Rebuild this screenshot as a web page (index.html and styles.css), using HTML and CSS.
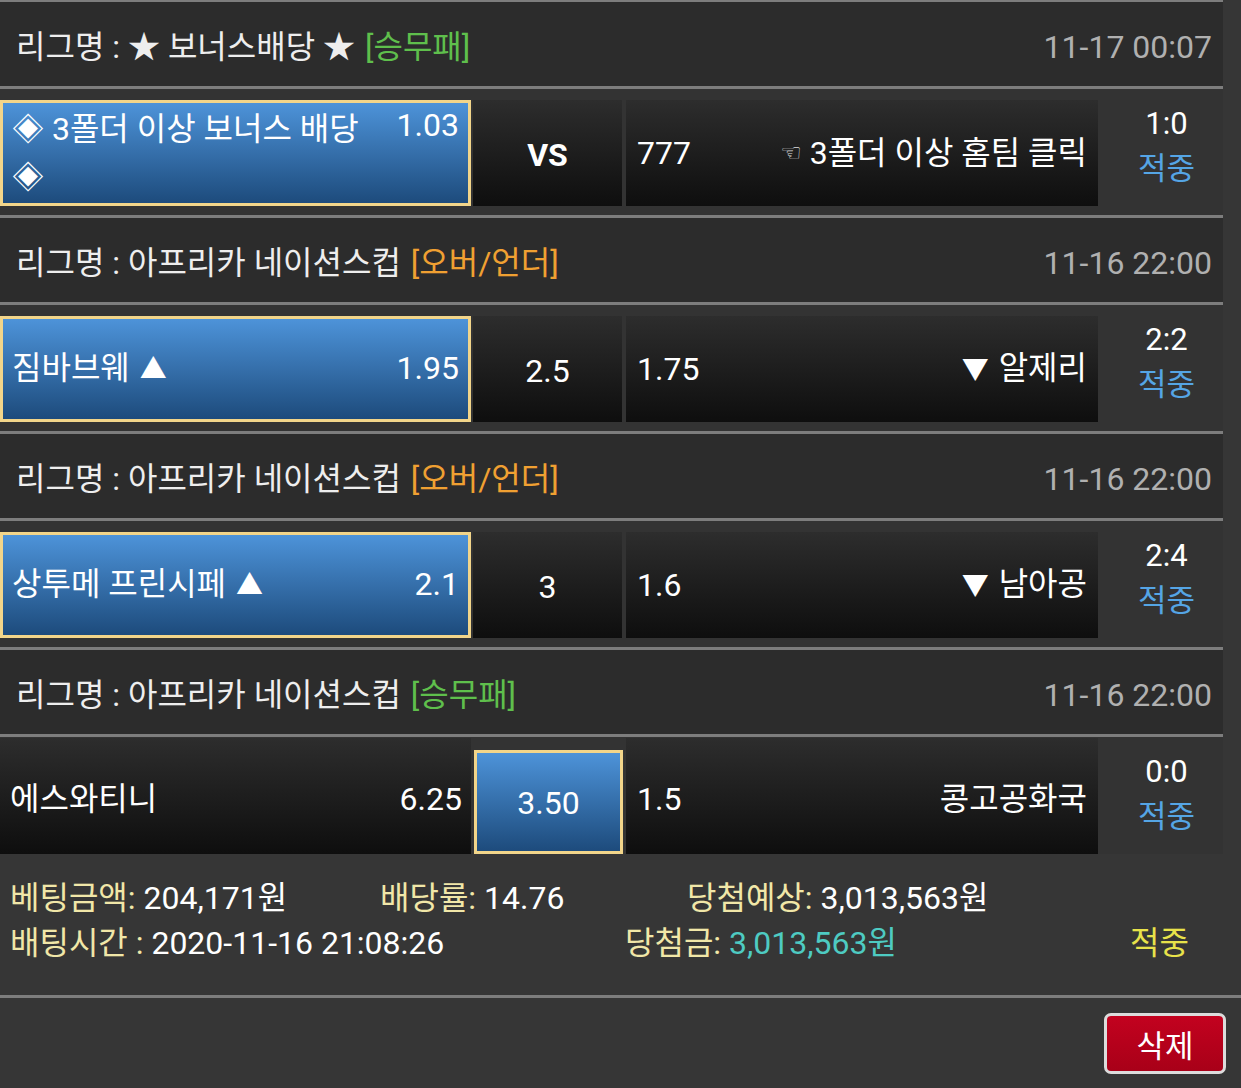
FILE: index.html
```html
<!DOCTYPE html>
<html lang="ko">
<head>
    <meta charset="UTF-8">
    <meta name="viewport" content="width=device-width, initial-scale=1.0">
    <title>배팅내역</title>
    <link rel="stylesheet" href="styles.css">
</head>
<body>
    <div class="slip">
        <div class="league">
            <div class="league-name">리그명 : ★ 보너스배당 ★ <span class="type win">[승무패]</span></div>
            <div class="league-time">11-17 00:07</div>
        </div>
        <div class="bet">
            <div class="cell home picked">
                <div class="pick-line">
                    <span class="team wrap">◈ 3폴더 이상 보너스 배당 ◈</span>
                    <span class="odds">1.03</span>
                </div>
            </div>
            <div class="cell mid"><b>VS</b></div>
            <div class="cell away">
                <span>777</span>
                <span><span class="hand">☜</span> 3폴더 이상 홈팀 클릭</span>
            </div>
            <div class="result"><span>1:0</span><span class="hit">적중</span></div>
        </div>

        <div class="league">
            <div class="league-name">리그명 : 아프리카 네이션스컵 <span class="type ou">[오버/언더]</span></div>
            <div class="league-time">11-16 22:00</div>
        </div>
        <div class="bet">
            <div class="cell home picked">
                <div class="pick-line">
                    <span class="team">짐바브웨 <span class="arrow">▲</span></span>
                    <span class="odds">1.95</span>
                </div>
            </div>
            <div class="cell mid">2.5</div>
            <div class="cell away">
                <span>1.75</span>
                <span><span class="arrow">▼</span> 알제리</span>
            </div>
            <div class="result"><span>2:2</span><span class="hit">적중</span></div>
        </div>

        <div class="league">
            <div class="league-name">리그명 : 아프리카 네이션스컵 <span class="type ou">[오버/언더]</span></div>
            <div class="league-time">11-16 22:00</div>
        </div>
        <div class="bet">
            <div class="cell home picked">
                <div class="pick-line">
                    <span class="team">상투메 프린시페 <span class="arrow">▲</span></span>
                    <span class="odds">2.1</span>
                </div>
            </div>
            <div class="cell mid">3</div>
            <div class="cell away">
                <span>1.6</span>
                <span><span class="arrow">▼</span> 남아공</span>
            </div>
            <div class="result"><span>2:4</span><span class="hit">적중</span></div>
        </div>

        <div class="league">
            <div class="league-name">리그명 : 아프리카 네이션스컵 <span class="type win">[승무패]</span></div>
            <div class="league-time">11-16 22:00</div>
        </div>
        <div class="bet last">
            <div class="cell home">
                <div class="pick-line">
                    <span class="team">에스와티니</span>
                    <span class="odds">6.25</span>
                </div>
            </div>
            <div class="cell mid picked">3.50</div>
            <div class="cell away">
                <span>1.5</span>
                <span>콩고공화국</span>
            </div>
            <div class="result"><span>0:0</span><span class="hit">적중</span></div>
        </div>
    </div>

    <div class="summary">
        <div class="sum-line first">
            <span><i>베팅금액:</i> 204,171원</span>
            <span><i>배당률:</i> 14.76</span>
            <span><i>당첨예상:</i> 3,013,563원</span>
        </div>
        <div class="sum-line second">
            <span><i>배팅시간 :</i> 2020-11-16 21:08:26</span>
            <span><i>당첨금:</i> <em>3,013,563원</em></span>
            <span class="win-text">적중</span>
        </div>
    </div>

    <div class="actions">
        <button type="button" class="del-btn">삭제</button>
    </div>
</body>
</html>
```

FILE: styles.css
```css
:root {
    --line: #7d7d7d;
    --page-bg: #363636;
    --league-bg: #2c2c2c;
    --bet-bg: #333;
    --pick-border: #f2d58a;
    --label: #f1e7a8;
}

* { box-sizing: border-box; }

body {
    margin: 0;
    background: var(--page-bg);
    color: #fff;
    font-family: Roboto, "Noto Sans CJK KR", sans-serif;
    font-size: 32px;
    width: 1241px;
    height: 1088px;
    overflow: hidden;
}

.slip {
    width: 1223px;
    border-top: 2px solid var(--line);
}

.league {
    height: 87px;
    border-bottom: 3px solid var(--line);
    background: var(--league-bg);
    display: flex;
    align-items: center;
    justify-content: space-between;
    padding: 6px 11px 0 16px;
    color: #eee;
    line-height: 40px;
}
.league-time { color: #b0b0b0; }
.type { margin-left: 2px; }
.type.win { color: #5fbf4c; }
.type.ou { color: #f0a032; }

.bet {
    height: 129px;
    border-bottom: 3px solid var(--line);
    background: var(--bet-bg);
    padding: 11px 0 9px 0;
    display: flex;
}
.bet.last {
    height: 117px;
    border-bottom: none;
    padding: 1px 0 0 0;
}

.cell {
    background: linear-gradient(#2d2d2d, #0e0e0e);
    display: flex;
    align-items: center;
    line-height: 40px;
}
.cell.picked {
    background: linear-gradient(#4d93d9, #1d4b7c);
    border: 3px solid var(--pick-border);
}
.bet.last .cell { padding-top: 6px; }

.home {
    width: 471px;
    padding: 0 9px 0 10px;
}
.home.picked { padding: 0 9px 0 9px; }

.pick-line {
    width: 100%;
    display: flex;
    justify-content: space-between;
    align-items: flex-start;
}
.team.wrap {
    max-width: 380px;
    line-height: 48px;
}
.arrow {
    font-size: 27px;
    margin: 0 2px;
}

.mid {
    width: 149px;
    margin: 0 4px 0 2px;
    justify-content: center;
    padding-top: 3px;
}
.mid b { font-weight: 700; }
.bet.last .mid.picked {
    margin: 12px 3px 0 3px;
    padding-top: 2px;
}

.away {
    width: 472px;
    justify-content: space-between;
    padding: 0 11px;
}
.hand {
    font-family: "DejaVu Sans", sans-serif;
    font-size: 24px;
    color: #ddd;
    vertical-align: 3px;
}

.result {
    width: 125px;
    display: flex;
    flex-direction: column;
    align-items: center;
    justify-content: center;
    line-height: 45px;
    padding: 0 0 14px 12px;
    font-size: 31px;
}
.bet.last .result { padding-bottom: 4px; }
.hit { color: #55a5e5; }

.summary {
    height: 144px;
    border-bottom: 3px solid var(--line);
    padding: 22px 0 0 10px;
    line-height: 45px;
}
.sum-line { display: grid; }
.sum-line.first { grid-template-columns: 370px 307px auto; }
.sum-line.second { grid-template-columns: 615px 505px auto; }
.sum-line i { font-style: normal; color: var(--label); }
.sum-line em { font-style: normal; color: #4ecbc2; }
.win-text { color: #e8e24a; }

.actions {
    display: flex;
    justify-content: flex-end;
    padding: 15px 15px 0 0;
}
.del-btn {
    width: 122px;
    height: 61px;
    background: linear-gradient(#c3021f, #a80018);
    border: 3px solid #dcdcdc;
    border-radius: 7px;
    color: #fff;
    font-family: Roboto, "Noto Sans CJK KR", sans-serif;
    font-size: 31px;
    padding: 0;
    cursor: pointer;
}
```
